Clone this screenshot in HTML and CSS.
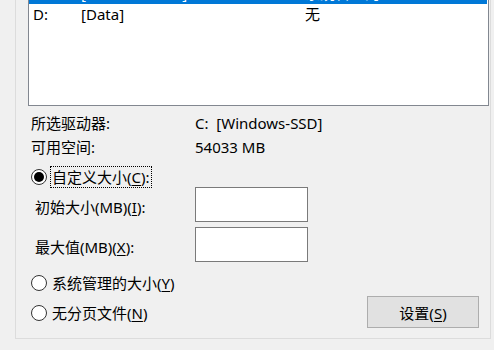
FILE: index.html
```html
<!DOCTYPE html>
<html lang="zh-CN">
<head>
<meta charset="utf-8">
<title>虚拟内存</title>
<link rel="stylesheet" href="styles.css">
</head>
<body>
<div class="group">
  <div class="list">
    <div class="row sel"><span class="c1">C:</span><span class="c2">[Windows-SSD]</span><span class="c3">系统管理的</span></div>
    <div class="row"><span class="c1">D:</span><span class="c2">[Data]</span><span class="c3">无</span></div>
  </div>
  <div class="info">
    <div class="irow"><span class="ilabel">所选驱动器:</span><span>C:&nbsp; [Windows-SSD]</span></div>
    <div class="irow"><span class="ilabel">可用空间:</span><span>54033 MB</span></div>
  </div>
  <div class="radio-row first"><span class="radio checked"></span><span class="rlabel focus">自定义大小(<u>C</u>):</span></div>
  <div class="field first-field"><span class="flabel">初始大小(MB)(<u>I</u>):</span><span class="input"></span></div>
  <div class="field second-field"><span class="flabel">最大值(MB)(<u>X</u>):</span><span class="input"></span></div>
  <div class="bottom">
    <div class="radios">
      <div class="radio-row"><span class="radio"></span><span class="rlabel">系统管理的大小(<u>Y</u>)</span></div>
      <div class="radio-row"><span class="radio"></span><span class="rlabel">无分页文件(<u>N</u>)</span></div>
    </div>
    <button class="btn">设置(<u>S</u>)</button>
  </div>
</div>
</body>
</html>
```

FILE: styles.css
```css
html, body {
  margin: 0;
  padding: 0;
  overflow: hidden;
  background: #f0f0f0;
}
body {
  width: 494px;
  height: 350px;
  font-family: "Noto Sans", "Noto Sans CJK SC", sans-serif;
  font-size: 15px;
  color: #000;
}
.group {
  margin: -19px 0 0 15px;
  width: 476px;
  box-sizing: border-box;
  border: 1px solid #dcdcdc;
  padding-bottom: 10px;
}
.list {
  margin-left: 12px;
  width: 461px;
  height: 124px;
  box-sizing: border-box;
  border: 1px solid #828790;
  background: #fff;
}
.row {
  display: flex;
  height: 21px;
  line-height: 21px;
  white-space: nowrap;
}
.row.sel {
  background: #0078d7;
  color: #fff;
  margin-right: 1px;
}
.c1 {
  width: 48px;
  padding-left: 4px;
}
.c2 {
  width: 224px;
}
.info {
  margin-top: 5px;
  padding-left: 15px;
}
.irow {
  display: flex;
  height: 24px;
  line-height: 24px;
  white-space: nowrap;
}
.ilabel {
  width: 164px;
}
.radio-row {
  display: flex;
  align-items: center;
  height: 22px;
  padding-left: 15px;
  white-space: nowrap;
}
.radio-row.first {
  margin-top: 7px;
}
.radio {
  width: 16px;
  height: 16px;
  box-sizing: border-box;
  border: 1px solid #333;
  border-radius: 50%;
  background: #fff;
  display: flex;
  align-items: center;
  justify-content: center;
  flex: none;
}
.radio.checked::after {
  content: "";
  width: 10px;
  height: 10px;
  border-radius: 50%;
  background: #000;
}
.rlabel {
  margin-left: 5px;
  line-height: 20px;
}
.rlabel.focus {
  margin-left: 3px;
  padding: 0 1px;
  border: 1px dotted #000;
  height: 20px;
}
.field {
  display: flex;
  align-items: center;
  padding-left: 19px;
  white-space: nowrap;
}
.first-field {
  margin-top: -1px;
}
.second-field {
  margin-top: 5px;
}
.flabel {
  width: 160px;
  padding-top: 4px;
}
.input {
  width: 113px;
  height: 35px;
  box-sizing: border-box;
  border: 1px solid #7a7a7a;
  background: #fff;
}
.bottom {
  display: flex;
  justify-content: space-between;
  align-items: flex-end;
  padding-top: 10px;
}
.radios {
  display: flex;
  flex-direction: column;
  gap: 8px;
  padding-bottom: 4px;
}
.btn {
  width: 112px;
  height: 32px;
  box-sizing: border-box;
  margin: 0 11px 0 0;
  padding: 0;
  border: 1px solid #adadad;
  background: #e1e1e1;
  font-family: inherit;
  font-size: 15px;
  color: #000;
}
u {
  text-decoration: underline;
  text-underline-offset: 2px;
}
```
